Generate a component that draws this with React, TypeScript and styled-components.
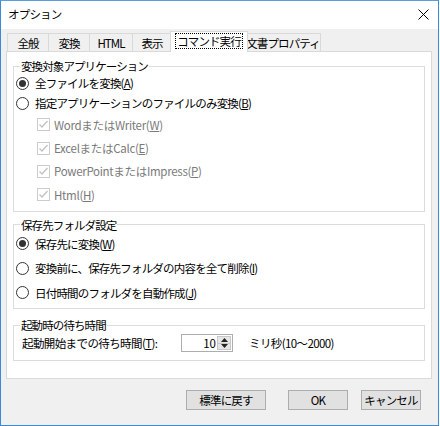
import React from "react";
import styled, { createGlobalStyle, css } from "styled-components";

const Global = createGlobalStyle`
  html, body { margin: 0; padding: 0; background: #fff; }
  body { font-family: "Noto Sans CJK JP", "Noto Sans", sans-serif; font-size: 11px; color: #000; }
  #root { width: 440px; height: 426px; }
  * { box-sizing: border-box; }
`;

const Window = styled.div`
  width: 439px;
  height: 426px;
  border: 1px solid #3a8ad8;
  border-top-color: #5a9ee0;
  background: #f0f0f0;
  display: flex;
  flex-direction: column;
`;

const TitleBar = styled.div`
  height: 28px;
  background: #fff;
  display: flex;
  align-items: center;
  justify-content: space-between;
  padding: 0 9px 2px 7px;
  font-size: 11.5px;
  letter-spacing: -0.8px;
  white-space: nowrap;
`;

const CloseIcon = () => (
  <svg width="11" height="11" viewBox="0 0 11 11">
    <path d="M0.5 0.5 L10.5 10.5 M10.5 0.5 L0.5 10.5" stroke="#000" strokeWidth="1" fill="none" />
  </svg>
);

const Content = styled.div`
  padding: 0 6px 0 5px;
  display: flex;
  flex-direction: column;
`;

const TabRow = styled.div`
  height: 22px;
  display: flex;
  align-items: flex-end;
  padding-left: 2px;
  position: relative;
  z-index: 1;
`;

const Tab = styled.div<{ $w: number; $active?: boolean }>`
  width: ${(p) => p.$w}px;
  height: 18px;
  border: 1px solid #d9d9d9;
  border-bottom: none;
  margin-left: -1px;
  background: #f0f0f0;
  display: flex;
  align-items: center;
  justify-content: center;
  font-size: 11.5px;
  letter-spacing: -0.9px;
  white-space: nowrap;
  ${(p) =>
    p.$active &&
    css`
      height: 21px;
      background: #fff;
      margin: 0 -2px -1px -2px;
      padding-bottom: 2px;
      position: relative;
    `}
`;

const Focus = styled.span`
  border: 1px dotted #000;
  padding: 0 1px;
  line-height: 14px;
`;

const Panel = styled.div`
  height: 328px;
  background: #fff;
  border: 1px solid #d9d9d9;
  padding: 0 6px;
  display: flex;
  flex-direction: column;
`;

const Group = styled.fieldset<{ $mt: number; $pb: number }>`
  margin: ${(p) => p.$mt}px 0 0 0;
  border: 1px solid #dcdcdc;
  padding: 0 6px ${(p) => p.$pb}px 2px;
  min-width: 0;
`;

const Legend = styled.legend`
  padding: 0 1px;
  margin-left: 4px;
  font-size: 11.5px;
  line-height: 14px;
  letter-spacing: -0.9px;
  white-space: nowrap;
`;

const Row = styled.div<{ $h: number; $indent?: number }>`
  height: ${(p) => p.$h}px;
  display: flex;
  align-items: center;
  padding-left: ${(p) => p.$indent || 0}px;
  font-size: 11.5px;
  letter-spacing: -0.8px;
  white-space: nowrap;
`;

const RadioCircle = styled.span<{ $on?: boolean }>`
  width: 13px;
  height: 13px;
  border: 1px solid #333;
  border-radius: 50%;
  margin-right: 6px;
  display: flex;
  align-items: center;
  justify-content: center;
  flex: none;
  &::after {
    content: "";
    display: ${(p) => (p.$on ? "block" : "none")};
    width: 7px;
    height: 7px;
    border-radius: 50%;
    background: #333;
  }
`;

const CheckBox = styled.span`
  width: 13px;
  height: 13px;
  border: 1px solid #cccccc;
  margin-right: 4px;
  display: flex;
  align-items: center;
  justify-content: center;
  flex: none;
`;

const Disabled = styled.span`
  color: #7a7a7a;
  letter-spacing: -0.3px;
`;

const U = styled.span`
  text-decoration: underline;
  text-underline-offset: 1px;
`;

const CheckMark = () => (
  <svg width="11" height="11" viewBox="0 0 11 11">
    <path d="M1.5 5.5 L4 8 L9.5 2" stroke="#c2c2c2" strokeWidth="1.3" fill="none" />
  </svg>
);

const SpinRow = styled.div`
  height: 22px;
  display: flex;
  align-items: center;
  padding-left: 6px;
  font-size: 11.5px;
  letter-spacing: -0.6px;
  white-space: nowrap;
`;

const SpinLabel = styled.span`
  width: 159px;
  flex: none;
`;

const SpinBox = styled.div`
  width: 52px;
  height: 18px;
  border: 1px solid #abadb3;
  display: flex;
  align-items: stretch;
  margin-right: 16px;
  background: #fff;
`;

const SpinValue = styled.div`
  flex: 1;
  text-align: right;
  padding-right: 1px;
  line-height: 16px;
  letter-spacing: 0;
`;

const SpinButtons = styled.div`
  width: 15px;
  display: flex;
  flex-direction: column;
  padding: 1px 1px 1px 0;
`;

const SpinBtn = styled.div`
  flex: 1;
  background: #e6e6e6;
  border: 1px solid #c8c8c8;
  display: flex;
  align-items: center;
  justify-content: center;
  & + & { border-top: none; }
`;

const Arrow = ({ up }: { up?: boolean }) => (
  <svg width="7" height="4" viewBox="0 0 7 4">
    <path d={up ? "M0 4 L3.5 0 L7 4 Z" : "M0 0 L3.5 4 L7 0 Z"} fill="#222" />
  </svg>
);

const Footer = styled.div`
  display: flex;
  justify-content: flex-end;
  padding: 11px 11px 0 0;
`;

const Button = styled.button<{ $w: number; $ml: number }>`
  width: ${(p) => p.$w}px;
  height: 20px;
  margin-left: ${(p) => p.$ml}px;
  background: #e1e1e1;
  border: 1px solid #adadad;
  font-family: inherit;
  font-size: 11.5px;
  letter-spacing: -0.8px;
  white-space: nowrap;
  color: #000;
  padding: 0;
  line-height: 16px;
`;

export default function App() {
  return (
    <>
      <Global />
      <Window>
        <TitleBar>
          <span>オプション</span>
          <CloseIcon />
        </TitleBar>
        <Content>
          <TabRow>
            <Tab $w={42}>全般</Tab>
            <Tab $w={42}>変換</Tab>
            <Tab $w={44}>HTML</Tab>
            <Tab $w={40}>表示</Tab>
            <Tab $w={78} $active>
              <Focus>コマンド実行</Focus>
            </Tab>
            <Tab $w={76}>文書プロパティ</Tab>
          </TabRow>
          <Panel>
            <Group $mt={7} $pb={4}>
              <Legend>変換対象アプリケーション</Legend>
              <Row $h={20}>
                <RadioCircle $on />
                全ファイルを変換(<U>A</U>)
              </Row>
              <Row $h={20}>
                <RadioCircle />
                指定アプリケーションのファイルのみ変換(<U>B</U>)
              </Row>
              {[
                ["WordまたはWriter", "W"],
                ["ExcelまたはCalc", "E"],
                ["PowerPointまたはImpress", "P"],
                ["Html", "H"],
              ].map(([t, k]) => (
                <Row $h={23.4} $indent={21} key={k}>
                  <CheckBox>
                    <CheckMark />
                  </CheckBox>
                  <Disabled>
                    {t}(<U>{k}</U>)
                  </Disabled>
                </Row>
              ))}
            </Group>
            <Group $mt={6} $pb={3}>
              <Legend>保存先フォルダ設定</Legend>
              <Row $h={24.5}>
                <RadioCircle $on />
                保存先に変換(<U>W</U>)
              </Row>
              <Row $h={24.5}>
                <RadioCircle />
                変換前に、保存先フォルダの内容を全て削除(<U>I</U>)
              </Row>
              <Row $h={24.5}>
                <RadioCircle />
                日付時間のフォルダを自動作成(<U>J</U>)
              </Row>
            </Group>
            <Group $mt={9} $pb={6}>
              <Legend>起動時の待ち時間</Legend>
              <SpinRow>
                <SpinLabel>
                  起動開始までの待ち時間(<U>T</U>):
                </SpinLabel>
                <SpinBox>
                  <SpinValue>10</SpinValue>
                  <SpinButtons>
                    <SpinBtn>
                      <Arrow up />
                    </SpinBtn>
                    <SpinBtn>
                      <Arrow />
                    </SpinBtn>
                  </SpinButtons>
                </SpinBox>
                <span>ミリ秒(10～2000)</span>
              </SpinRow>
            </Group>
          </Panel>
          <Footer>
            <Button $w={80} $ml={0}>標準に戻す</Button>
            <Button $w={60} $ml={22}>OK</Button>
            <Button $w={60} $ml={13}>キャンセル</Button>
          </Footer>
        </Content>
      </Window>
    </>
  );
}
